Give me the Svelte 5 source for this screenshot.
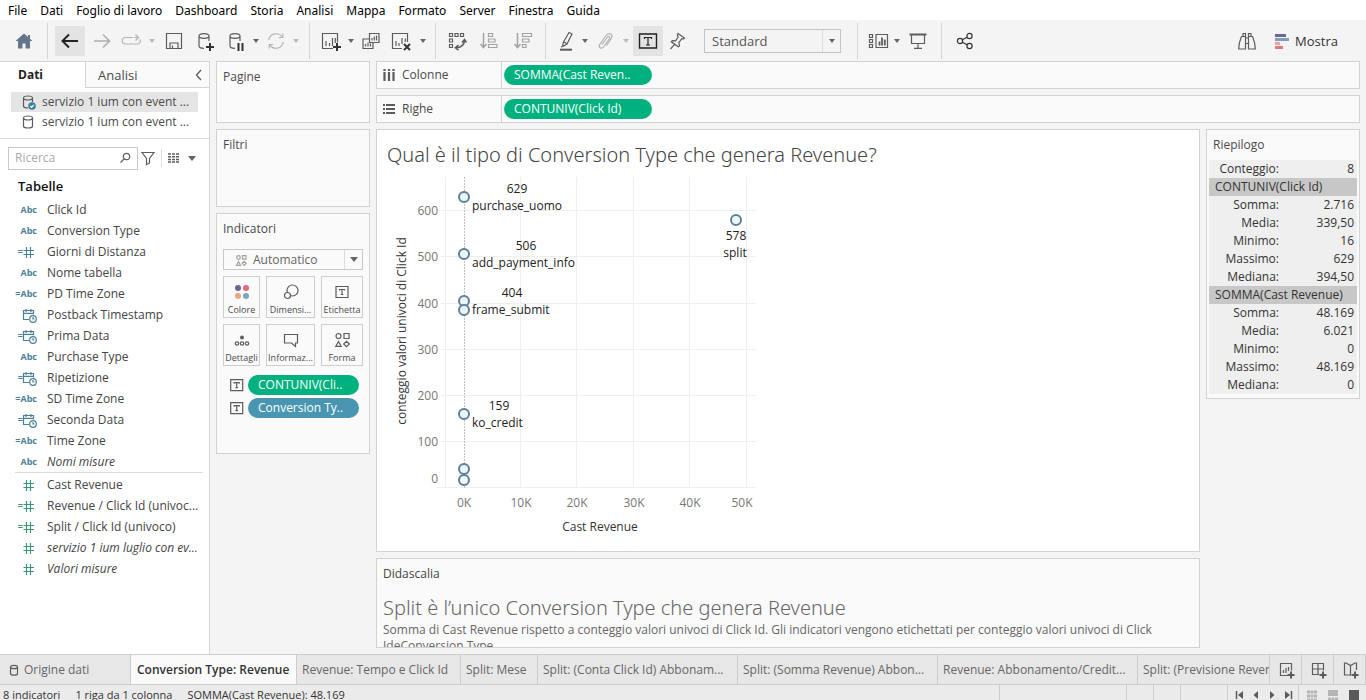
<script>
  const svg = (body, size = 24, cls = '') =>
    `<svg class="ico ${cls}" width="${size}" height="${size}" viewBox="0 0 ${size} ${size}" fill="none" stroke="currentColor" stroke-width="1.2" aria-hidden="true">${body}</svg>`;

  const plus = (x, y) => `<path d="M${x - 4} ${y}h8M${x} ${y - 4}v8" stroke="#333" stroke-width="2"/>`;
  const cyl = '<path d="M6 7v10c0 1.3 2 2.3 5 2.3M16 7v5M6 7c0-1.3 2-2.3 5-2.3s5 1 5 2.3-2 2.3-5 2.3S6 8.300 6 7z"/>';

  const icons = {
    home: svg('<path d="M12 4.500 3.500 12H6v7.500h4.500v-5h3v5H18V12h2.500L18 9.800V6h-2v2z" fill="#62778a" stroke="none"/>'),
    back: svg('<path d="M20 12H5M11 5.500 4.500 12l6.500 6.500" stroke="#222" stroke-width="2"/>'),
    forward: svg('<path d="M4 12h15M13 5.500l6.500 6.500-6.500 6.500" stroke="#adadad" stroke-width="1.600"/>'),
    redo: svg('<path d="M14 8.500H6.500a3 3 0 0 0 0 6.500h12a3 3 0 0 0 2.500-4.500M15 8.500h4M16.500 5.500 19.500 8.500l-3 3" stroke="#b4b4b4"/>'),
    save: svg('<path d="M4.500 4.500h15v15h-15zM8 19.500v-5.500h8v5.500M10.500 19.500v-3"/>'),
    dbAdd: svg(cyl + plus(17, 18)),
    dbPause: svg(cyl + '<path d="M14.500 14v8M18.500 14v8" stroke="#333" stroke-width="2"/>'),
    refresh: svg('<path d="M4.800 11a7.300 7.300 0 0 1 13.500-2.600M19.200 13a7.300 7.300 0 0 1-13.500 2.600M18.800 4.500v4h-4M5.200 19.500v-4h4" stroke="#b4b4b4"/>'),
    sheetAdd: svg('<path d="M14 19.500H3.500v-15h15v9M7 17v-5M10.500 17v-3M13.500 17V9M16.300 14V9"/>' + plus(18, 18)),
    duplicate: svg('<path d="M10.500 4.500h9.500v9h-9.500zM10.500 10H4v9.500h10v-6M13 11.500V9M15.300 11.500V7.500M17.500 11.500V6.500M6.500 17.500v-2.500M9 17.500v-4M11.500 17.500v-3"/>'),
    clear: svg('<path d="M13 19.500H3.500v-15h15v8.500M7 17v-5M10 17v-3M13 15V9M16.300 13V9.500"/><path d="M15 15l6 6M21 15l-6 6" stroke="#333" stroke-width="2"/>'),
    swap: svg('<path d="M4.500 4.500h3v3h-3zM10 4.500h3v3h-3zM15.500 4.500h3v3h-3zM4.500 10h3v3h-3zM4.500 15.500h3v3h-3z"/><path d="M19.500 11.500c0 4-3.500 7.300-8.500 7.300M17 13.500l2.500-3 2 3M13.500 16l-3.200 2.700 3.200 2.500" stroke-width="1.500"/>'),
    sortAsc: svg('<path d="M6.500 4v14M3.500 15l3 3.500 3-3.500" stroke-width="1.500"/><path d="M11.500 4.500h4v3h-4zM11.500 10h6.500v3h-6.500zM11.500 15.500h8.500v3h-8.500z"/>', 24, 'dim'),
    sortDesc: svg('<path d="M6.500 4v14M3.500 15l3 3.500 3-3.500" stroke-width="1.500"/><path d="M11.500 4.500h9v3h-9zM11.500 10h6.500v3h-6.500zM11.500 15.500h3.500v3h-3.500z"/>', 24, 'dim'),
    pen: svg('<path d="M15 3.500l3 1.500-5 10-3.500 2-.8-.5.800-3.500zM10 13l3 1.700" /><path d="M6 20.700h12" stroke-width="2"/><path d="M7 18l2.500-1"/>'),
    clip: svg('<path d="M9 15.500l5.500-7.500c1.200-1.500 3 0 2 1.500l-6 8.500c-2 2.500-5.500.3-3.800-2.500l6.800-9.500c2.500-3.200 7-.3 5 3l-5 7.500" stroke="#b0b0b0"/>'),
    textBox: svg('<path d="M3.500 5h17v14h-17z" stroke="#222" stroke-width="1.400"/><path d="M8.500 10V8.500h7V10M12 8.500v7.500M10 16h4" stroke="#222"/>'),
    pin: svg('<path d="M13 4.500l6.500 4.500-1.200 1-1.600-.3-2.800 4 .6 3.300-1.200.8-7-5 1-1.200 3.300.2 2.600-3.800-.8-1.800zM9.500 15.300 5.500 20"/>'),
    cards: svg('<path d="M9 5.500h11.500v13H9z"/><path d="M12.500 16.500v-4M15 16.500v-8M17.800 16.500v-6" stroke-width="1.800"/><path d="M2.500 5.500h3v3h-3zM2.500 10.500h3v3h-3zM2.500 15.500h3v3h-3z"/>'),
    present: svg('<path d="M3.500 5.500h17" stroke-width="2"/><path d="M5.500 6v8.500h13V6M12 14.500v4.500M8 19.300h8"/>'),
    share: svg('<circle cx="7" cy="12" r="2.600"/><circle cx="16.500" cy="7" r="2.600"/><circle cx="16.500" cy="17" r="2.600"/><path d="M9.300 10.800l4.900-2.600M9.300 13.200l4.900 2.600"/>', 24, 'dark'),
    binoculars: svg('<path d="M10.500 6.500v13.500H3.700c0-5 1.300-9 2.800-12.500h4M13.500 6.500v13.500h6.800c0-5-1.300-9-2.800-12.500h-4M8 7V4.500h2.500V7M13.500 7V4.500H16V7M10.500 9h3M10.500 14.500h3"/>'),
    showMe: svg('<g stroke="none"><path d="M1 1h11v3H1z" fill="#6d6690"/><path d="M1 5h14v3H1z" fill="#7f9cbd"/><path d="M1 9h5v3H1z" fill="#eba39a"/><path d="M1 13h8v3H1z" fill="#e0787b"/></g>', 16),
    chevron: svg('<path d="M10 3 5.500 8l4.500 5" stroke-width="1.300"/>', 16),
    db: svg('<path d="M3.500 4v8c0 1.200 1.800 2 4.500 2s4.500-.8 4.500-2V4M3.500 4c0-1.200 1.800-2 4.500-2s4.500.8 4.500 2-1.800 2-4.500 2-4.500-.8-4.500-2z"/>', 16),
    dbSmall: svg('<path d="M3.500 4v6.500c0 1 1.500 1.700 3.500 1.700s3.500-.7 3.500-1.700V4M3.500 4c0-1 1.500-1.700 3.500-1.700s3.500.7 3.500 1.700-1.500 1.700-3.500 1.700S3.500 5 3.500 4z"/>', 14),
    dbOk: svg('<path d="M3.500 4v8c0 1.200 1.800 2 4.500 2M12.500 8V4M3.500 4c0-1.200 1.800-2 4.500-2s4.500.8 4.500 2-1.800 2-4.500 2-4.500-.8-4.500-2z"/><circle cx="12" cy="12" r="3.800" fill="#3d7d9c" stroke="none"/><path d="M10.300 12l1.300 1.300 2.200-2.500" stroke="#fff"/>', 16),
    search: svg('<circle cx="9.500" cy="6.500" r="3.200"/><path d="M7 9 3.500 12.500"/>', 16),
    filter: svg('<path d="M2 2.500h12l-4.500 6v4.500L6.500 14.500V8.500z"/>', 16),
    grid: svg('<path d="M2 4h12M2 6.700h12M2 9.400h12M2 12.100h12" stroke-width="1.500" stroke-dasharray="3 1"/>', 16),
    columns: svg('<path d="M3.500 5v9M8 5v9M12.500 5v9M3.500 2v2M8 2v2M12.500 2v2" stroke-width="2.200"/>', 16),
    rows: svg('<path d="M5 4h9M5 8h9M5 12h9M2 4h2M2 8h2M2 12h2" stroke-width="2.200"/>', 16),
    shapesSmall: svg('<circle cx="4.500" cy="4.500" r="1.800"/><path d="M8.500 2.700H12v3.500H8.500zM4.500 8.500l2 3.800h-4zM10.200 8.300l2 2-2 2-2-2z"/>', 14, 'dim'),
    color: svg('<g stroke="none"><circle cx="8" cy="8" r="3" fill="#706390"/><circle cx="16" cy="8" r="3" fill="#df6b7c"/><circle cx="8" cy="16" r="3" fill="#eba980"/><circle cx="16" cy="16" r="3" fill="#7fa4c0"/></g>'),
    size: svg('<circle cx="13.500" cy="10.500" r="5.500"/><circle cx="8.500" cy="15.500" r="3" fill="#fafafa"/>'),
    label: svg('<path d="M6 6.500h12v11H6z"/><path d="M9.500 10.500v-1h5v1M12 9.500v5M10.800 14.500h2.500"/>'),
    detail: svg('<circle cx="12" cy="9.500" r="2" fill="currentColor" stroke="none"/><circle cx="7" cy="15.500" r="1.700"/><circle cx="12" cy="15.500" r="1.700"/><circle cx="17" cy="15.500" r="1.700"/>'),
    tooltip: svg('<path d="M5.500 6.500h13v8.500h-2v3.500l-4-3.500h-7z"/>'),
    shape: svg('<circle cx="8.500" cy="8" r="2.500"/><path d="M14 5.500h5v5h-5zM8.500 13.500l2.700 4.800H5.800zM16.500 13.300l2.800 2.700-2.800 2.700-2.800-2.700z"/>'),
    tSmall: svg('<path d="M.7 1.700h12v11h-12z"/><path d="M4.200 5.700v-1h5v1M6.700 4.700v5M5.500 9.700H8"/>', 14),
    hash: svg('<path d="M5.500 3v11M9.500 3v11M2.500 6.500h10.500M2.500 10.500h10.500"/>', 16),
    date: svg('<path d="M8 12.500H2.500v-9h10v4M2.500 6.300h10M5 2v3M10 2v3"/><circle cx="12" cy="12" r="3.300"/><path d="M12 10v2h1.500"/>', 16),
    tabSheet: svg('<path d="M10 14.500H2.500v-12h11v7M5.500 12V9M8 12V7M10.500 10V6"/><path d="M9.500 14h7M13 10.500v7" stroke-width="2"/>', 18),
    tabDash: svg('<path d="M9 13.500H2.500v-11h11v7M2.500 8h11M8 2.500v11"/><path d="M9.500 14h7M13 10.500v7" stroke-width="2"/>', 18),
    tabStory: svg('<path d="M9 14.500 8.500 14H2.500v-12h1.500l4.500 2.500 4.500-2.500h1.500V9M8.500 4.500v9.500"/><path d="M9.500 14h7M13 10.500v7" stroke-width="2"/>', 18),
    first: svg('<path d="M2.500 2v8" stroke-width="1.500"/><path d="M9 2v8L4 6z" fill="currentColor" stroke="none"/>', 12),
    prev: svg('<path d="M8 2v8L3.500 6z" fill="currentColor" stroke="none"/>', 12),
    next: svg('<path d="M4 2v8l4.500-4z" fill="currentColor" stroke="none"/>', 12),
    last: svg('<path d="M9.500 2v8" stroke-width="1.500"/><path d="M3 2v8l5-4z" fill="currentColor" stroke="none"/>', 12),
    viewGrid: svg('<path d="M1 3h10M1 7h10M1 11h10" stroke="#b5b5b5" stroke-width="3" stroke-dasharray="3 .5"/>', 12),
    viewStrip: svg('<path d="M1 1h10v6H1z" fill="#b5b5b5" stroke="none"/><path d="M1 10h10" stroke="#b5b5b5" stroke-width="3" stroke-dasharray="3 .5"/>', 12),
    viewFull: svg('<path d="M1 1h10v11H1z" fill="#5a5a5a" stroke="none"/>', 12)
  };

  const menus = ['File', 'Dati', 'Foglio di lavoro', 'Dashboard', 'Storia', 'Analisi', 'Mappa', 'Formato', 'Server', 'Finestra', 'Guida'];

  const toolsLeft = [
    ['home', 34], ['sep'], ['back', 30, 'on'], ['forward', 34], ['redo', 24], ['caret', 18, 'off'], ['save', 26],
    ['dbAdd', 36], ['dbPause', 26], ['caret', 14], ['refresh', 26], ['caret', 14, 'off'], ['sep'],
    ['sheetAdd', 28], ['caret', 12], ['duplicate', 28], ['clear', 32], ['caret', 12], ['sep'],
    ['swap', 28], ['sortAsc', 36], ['sortDesc', 32], ['sep'],
    ['pen', 26], ['caret', 12], ['clip', 28], ['caret', 14, 'off'], ['textBox', 30, 'on'], ['pin', 28]
  ];
  const toolsRight = [['sep'], ['cards', 28], ['caret', 8], ['present', 34], ['sep'], ['share', 32]];

  const dimensions = [
    ['abc', 'Click Id'], ['abc', 'Conversion Type'], ['=hash', 'Giorni di Distanza'], ['abc', 'Nome tabella'],
    ['=abc', 'PD Time Zone'], ['date', 'Postback Timestamp'], ['=date', 'Prima Data'], ['abc', 'Purchase Type'],
    ['=date', 'Ripetizione'], ['=abc', 'SD Time Zone'], ['=date', 'Seconda Data'], ['=abc', 'Time Zone'],
    ['abc', 'Nomi misure', true]
  ];
  const measures = [
    ['hash', 'Cast Revenue'], ['=hash', 'Revenue / Click Id (univoc...'], ['=hash', 'Split / Click Id (univoco)'],
    ['hash', 'servizio 1 ium luglio con ev...', true], ['hash', 'Valori misure', true]
  ];

  const marks = [
    ['color', 'Colore'], ['size', 'Dimensi...'], ['label', 'Etichetta'],
    ['detail', 'Dettagli'], ['tooltip', 'Informaz...'], ['shape', 'Forma']
  ];

  const summary = [
    ['CONTUNIV(Click Id)', [['Somma:', '2.716'], ['Media:', '339,50'], ['Minimo:', '16'], ['Massimo:', '629'], ['Mediana:', '394,50']]],
    ['SOMMA(Cast Revenue)', [['Somma:', '48.169'], ['Media:', '6.021'], ['Minimo:', '0'], ['Massimo:', '48.169'], ['Mediana:', '0']]]
  ];

  const tabs = [
    ['Revenue: Tempo e Click Id', 164], ['Split: Mese', 77], ['Split: (Conta Click Id) Abbonam...', 200],
    ['Split: (Somma Revenue) Abbon...', 200], ['Revenue: Abbonamento/Credit...', 200]
  ];

  const px = (v) => Math.round(87 + v * 5.65);
  const py = (v) => Math.round(317.4 - v * 0.462);
  const points = [
    { x: 0, y: 629, name: 'purchase_uomo', lx: 95, cx: 140 },
    { x: 0, y: 506, name: 'add_payment_info', lx: 95, cx: 149 },
    { x: 0, y: 404, name: 'frame_submit', lx: 95, cx: 135 },
    { x: 0, y: 385 },
    { x: 0, y: 159, name: 'ko_credit', lx: 95, cx: 122 },
    { x: 0, y: 40 },
    { x: 0, y: 16 },
    { x: 48.169, y: 578 }
  ];
</script>

<div class="app">
  <nav class="menubar">
    {#each menus as m}<button>{m}</button>{/each}
  </nav>

  {#snippet tool(t)}
    {#if t[0] === 'sep'}
      <span class="sep"></span>
    {:else if t[0] === 'caret'}
      <button class="tool {t[2] ?? ''}" style="width:{t[1]}px" aria-label="opzioni"><i class="caret"></i></button>
    {:else}
      <button class="tool {t[2] ?? ''}" style="width:{t[1]}px" aria-label={t[0]}>{@html icons[t[0]]}</button>
    {/if}
  {/snippet}

  <header class="toolbar">
    {#each toolsLeft as t}{@render tool(t)}{/each}
    <label class="fit">
      <select aria-label="Adatta"><option>Standard</option></select>
      <span class="drop"><i class="caret"></i></span>
    </label>
    {#each toolsRight as t}{@render tool(t)}{/each}
    <span class="grow"></span>
    <button class="tool bino" aria-label="Cerca">{@html icons.binoculars}</button>
    <button class="showme">{@html icons.showMe}<span>Mostra</span></button>
  </header>

  {#snippet field(f, kind)}
    <li class={kind}>
      <span class="type">
        {#if f[0].startsWith('=')}<b>=</b>{/if}
        {#if f[0].endsWith('abc')}<b>Abc</b>{:else}{@html icons[f[0].replace('=', '')]}{/if}
      </span>
      <span class:italic={f[2]}>{f[1]}</span>
    </li>
  {/snippet}

  <div class="main">
    <aside class="data">
      <div class="panes">
        <button class="current">Dati</button>
        <button class="other"><span>Analisi</span>{@html icons.chevron}</button>
      </div>
      <ul class="sources">
        <li class="picked">{@html icons.dbOk}<span>servizio 1 ium con event ...</span></li>
        <li>{@html icons.db}<span>servizio 1 ium con event ...</span></li>
      </ul>
      <div class="find">
        <label class="box"><input type="text" placeholder="Ricerca" aria-label="Ricerca" />{@html icons.search}</label>
        <button aria-label="Filtro">{@html icons.filter}</button>
        <span class="bar"></span>
        <button aria-label="Visualizza">{@html icons.grid}<i class="caret big"></i></button>
      </div>
      <h2>Tabelle</h2>
      <ul class="fields">{#each dimensions as f}{@render field(f, 'dim-field')}{/each}</ul>
      <ul class="fields measures">{#each measures as f}{@render field(f, 'mea-field')}{/each}</ul>
    </aside>

    <div class="work">
      <div class="cards">
        <section class="card pages"><h3>Pagine</h3></section>
        <section class="card filters"><h3>Filtri</h3></section>
        <section class="card marks">
          <h3>Indicatori</h3>
          <label class="marktype">
            {@html icons.shapesSmall}
            <select aria-label="Tipo di indicatore"><option>Automatico</option></select>
            <span class="drop"><i class="caret big"></i></span>
          </label>
          <div class="markgrid">
            {#each marks as m}<button>{@html icons[m[0]]}<span>{m[1]}</span></button>{/each}
          </div>
          <div class="encoding">{@html icons.tSmall}<button class="pill green">CONTUNIV(Cli..</button></div>
          <div class="encoding">{@html icons.tSmall}<button class="pill blue">Conversion Ty..</button></div>
        </section>
      </div>

      <div class="stage">
        <div class="shelf">
          <span class="name">{@html icons.columns}Colonne</span>
          <button class="pill green">SOMMA(Cast Reven..</button>
        </div>
        <div class="shelf">
          <span class="name">{@html icons.rows}Righe</span>
          <button class="pill green">CONTUNIV(Click Id)</button>
        </div>
        <div class="lower">
          <div class="viewcol">
            <section class="view">
              <h1>Qual è il tipo di Conversion Type che genera Revenue?</h1>
              <svg class="chart" width="400" height="370" viewBox="0 0 400 370" role="img" aria-label="Cast Revenue">
                <g class="gridlines">
                  <path d="M68.5 7V318" />
                  {#each [10, 20, 30, 40, 50] as v}<path d="M{px(v) - 0.5} 7V318" />{/each}
                  {#each [100, 200, 300, 400, 500, 600] as v}<path d="M64 {py(v) + 0.5}H379" />{/each}
                  <path d="M60 317.500H379" />
                </g>
                <path class="zero" d="M87.500 7V318" />
                <g class="ticks">
                  {#each [100, 200, 300, 400, 500, 600] as v}<text x="61" y={py(v) + 5} text-anchor="end">{v}</text>{/each}
                  <text x="61" y="313" text-anchor="end">0</text>
                  {#each [0, 10, 20, 30, 40] as v}<text x={px(v)} y="337" text-anchor="middle">{v}K</text>{/each}
                  <text x="365" y="337" text-anchor="middle">50K</text>
                </g>
                {#each points as p}
                  <circle cx={px(p.x)} cy={py(p.y)} r="5" />
                  {#if p.name}
                    <text x={p.cx} y={py(p.y) - 4} text-anchor="middle">{p.y}</text>
                    <text x={p.lx} y={py(p.y) + 13}>{p.name}</text>
                  {/if}
                {/each}
                <text x="359" y="70" text-anchor="middle">578</text>
                <text x="358" y="87" text-anchor="middle">split</text>
                <text class="axis" x="223" y="361" text-anchor="middle">Cast Revenue</text>
                <text class="axis" transform="translate(29 161) rotate(-90)" text-anchor="middle">conteggio valori univoci di Click Id</text>
              </svg>
            </section>
            <section class="caption">
              <h3>Didascalia</h3>
              <h4>Split è l’unico Conversion Type che genera Revenue</h4>
              <p>Somma di Cast Revenue rispetto a conteggio valori univoci di Click Id. Gli indicatori vengono etichettati per conteggio valori univoci di Click IdeConversion Type.</p>
            </section>
          </div>
          <section class="card summary">
            <h3>Riepilogo</h3>
            <table>
              <tbody>
                <tr><th>Conteggio:</th><td>8</td></tr>
                {#each summary as [title, rows]}
                  <tr class="group"><th colspan="2">{title}</th></tr>
                  {#each rows as [k, v]}<tr><th>{k}</th><td>{v}</td></tr>{/each}
                {/each}
              </tbody>
            </table>
          </section>
        </div>
      </div>
    </div>
  </div>

  <nav class="tabs">
    <button class="source">{@html icons.dbSmall}Origine dati</button>
    <button class="active">Conversion Type: Revenue</button>
    {#each tabs as [t, w]}<button style="width:{w}px">{t}</button>{/each}
    <button class="rest">Split: (Previsione Revenue)</button>
    {#each ['tabSheet', 'tabDash', 'tabStory'] as n}<button class="add" aria-label={n}>{@html icons[n]}</button>{/each}
  </nav>

  <footer class="status">
    <span>8 indicatori</span><span>1 riga da 1 colonna</span><span>SOMMA(Cast Revenue): 48.169</span>
    <div class="cells">
      <i style="width:127px"></i><i style="width:27px"></i><i style="width:27px"></i><i style="width:47px"></i>
      <div class="nav">{#each ['first', 'prev', 'next', 'last'] as n}<button aria-label={n}>{@html icons[n]}</button>{/each}</div>
      <div class="modes">{#each ['viewGrid', 'viewStrip', 'viewFull'] as n}<button aria-label={n}>{@html icons[n]}</button>{/each}</div>
    </div>
  </footer>
</div>

<style>
  :global(body) { margin: 0; }
  .app {
    height: 100vh; display: flex; flex-direction: column; overflow: hidden;
    background: #f4f4f4; color: #4a4a4a;
    font: 12px/18px "Open Sans", "Noto Sans", sans-serif;
  }
  .app :global(*) { box-sizing: border-box; }
  .app :global(.ico) { display: block; flex: none; color: #5c5c5c; }
  .app :global(.ico.dim) { color: #a3a3a3; }
  .app :global(.ico.dark) { color: #333; }
  button, select, input { font: inherit; color: inherit; background: none; border: 0; padding: 0; margin: 0; border-radius: 0; white-space: nowrap; }
  h1, h2, h3, h4, p, ul { margin: 0; padding: 0; font-weight: 400; list-style: none; }
  h3 { font-size: 12px; }

  .menubar { flex: none; display: flex; height: 20px; padding: 2px 8px 0; gap: 13px; background: #fff; color: #000; }
  .menubar button { font-family: "Noto Sans", sans-serif; }

  .toolbar { flex: none; display: flex; align-items: center; height: 41px; padding-left: 7px; }
  .tool { flex: none; display: flex; align-items: center; justify-content: center; height: 30px; }
  .tool.on { background: #e3e3e3; }
  .sep { flex: none; width: 1px; height: 36px; margin: 0 7px 0 6px; background: #d4d4d4; }
  .caret { display: block; border: 3px solid transparent; border-top: 4px solid #666; border-bottom: 0; }
  .caret.big { border-width: 4px; border-bottom: 0; border-top-width: 5px; }
  .off .caret { border-top-color: #bbb; }
  .fit { display: flex; align-items: center; width: 137px; height: 24px; margin: 0 10px 0 13px; border: 1px solid #c4c4c4; flex: none; }
  select { appearance: none; flex: 1; min-width: 0; height: 100%; }
  .fit select { padding-left: 7px; font-size: 13px; color: #555; }
  .drop { display: flex; align-items: center; justify-content: center; width: 18px; height: 100%; border-left: 1px solid #ddd; }
  .grow { flex: 1; }
  .bino { width: 30px; margin-right: 12px; }
  .showme { display: flex; align-items: center; gap: 5px; margin-right: 28px; color: #333; font-size: 13px; }

  .main { flex: 1; min-height: 0; display: flex; }
  .data { flex: none; width: 210px; background: #fff; border-right: 1px solid #d4d4d4; border-top: 1px solid #d4d4d4; overflow: hidden; }
  .panes { display: flex; height: 26px; }
  .panes button { font-size: 13px; }
  .current { width: 85px; padding-left: 18px; text-align: left; font-weight: 700; color: #222; }
  .panes .current { font-size: 12px; }
  .other { flex: 1; display: flex; align-items: center; justify-content: space-between; padding: 0 2px 0 12px; background: #fafafa; border-left: 1px solid #d4d4d4; border-bottom: 1px solid #d4d4d4; }
  .sources { padding: 4px 11px 6px; border-bottom: 1px solid #d9d9d9; }
  .sources li { display: flex; align-items: center; gap: 6px; height: 20px; padding-left: 9px; white-space: nowrap; }
  .picked { background: #e5e5e5; }
  .find { display: flex; align-items: center; height: 38px; padding-left: 8px; }
  .find button { display: flex; align-items: center; gap: 6px; }
  .box { display: flex; align-items: center; width: 130px; height: 23px; margin-right: 2px; padding: 0 4px 0 6px; border: 1px solid #c8c8c8; }
  .box input { flex: 1; min-width: 0; outline: 0; }
  .box input::placeholder { color: #aaa; opacity: 1; }
  .bar { width: 1px; height: 18px; margin: 0 4px 0 5px; background: #ddd; }
  .data h2 { padding: 0 18px; height: 22px; font-size: 13px; font-weight: 600; color: #111; }
  .fields li { display: flex; align-items: center; height: 21px; gap: 10px; white-space: nowrap; color: #444; }
  .type { display: flex; align-items: center; justify-content: flex-end; width: 37px; flex: none; color: #4a8199; }
  .type b { font-size: 9px; font-weight: 700; }
  .type b + :global(.ico) { margin-left: -2px; }
  .dim-field :global(.ico) { color: #4a8199; }
  .mea-field :global(.ico), .mea-field .type { color: #3c957b; }
  .italic { font-style: italic; }
  .measures { margin: 0 6px 0 15px; padding-top: 1px; border-top: 1px solid #dcdcdc; }
  .measures .type { width: 22px; }

  .work { flex: 1; min-width: 0; display: flex; gap: 6px; padding: 0 6px 6px; }
  .cards { flex: none; width: 154px; display: flex; flex-direction: column; gap: 6px; }
  .card, .shelf, .view, .caption { border: 1px solid #d2d2d2; background: #fafafa; }
  .card h3 { padding: 6px; }
  .pages { height: 62px; }
  .filters { height: 78px; }
  .marks { height: 241px; }
  .marktype { display: flex; align-items: center; gap: 5px; height: 21px; margin: 5px 6px 6px; padding-left: 10px; border: 1px solid #c8c8c8; color: #666; }
  .markgrid { display: grid; grid-template-columns: 37fr 49fr 42fr; gap: 6px; margin: 0 6px 9px; }
  .markgrid button { display: flex; flex-direction: column; align-items: center; height: 42px; padding-top: 3px; border: 1px solid #cecece; font-size: 9px; line-height: 12px; min-width: 0; }
  .encoding { display: flex; align-items: center; gap: 4px; height: 20px; margin: 0 10px 3px 13px; }
  .pill { height: 20px; border-radius: 10px; color: #fff; text-align: left; padding: 0 10px; line-height: 20px; }
  .encoding .pill { flex: 1; }
  .green { background: #00b180; }
  .blue { background: #4996b2; }

  .stage { flex: 1; min-width: 0; display: flex; flex-direction: column; gap: 6px; }
  .shelf { flex: none; display: flex; align-items: center; height: 28px; gap: 2px; }
  .shelf .name { display: flex; align-items: center; gap: 5px; width: 125px; height: 100%; padding-left: 4px; border-right: 1px solid #d2d2d2; }
  .shelf .pill { width: 148px; }
  .lower { flex: 1; min-height: 0; display: flex; align-items: flex-start; gap: 6px; }
  .viewcol { flex: 1; min-width: 0; height: 100%; display: flex; flex-direction: column; gap: 6px; }
  .view { flex: 1; min-height: 0; overflow: hidden; background: #fff; }
  h1, h4 { font-family: "Noto Sans", "Open Sans", sans-serif; font-size: 20px; line-height: 28px; font-weight: 300; }
  .view h1 { height: 40px; padding: 11px 10px 0; color: #444; }
  .chart { display: block; font-size: 12px; fill: #222; }
  .gridlines path { stroke: #efefef; }
  .zero { stroke: #c0c0c0; stroke-dasharray: 2 1; }
  .ticks { fill: #777; }
  .axis { fill: #333; }
  .chart circle { fill: #eef8fc; stroke: #5b809c; stroke-width: 2; }
  .caption { flex: none; height: 90px; padding: 6px; overflow: hidden; color: #666; }
  .caption h3 { color: #444; }
  .caption h4 { margin-top: 11px; }
  .caption p { line-height: 16px; }

  .summary { flex: none; width: 154px; padding: 0 2px 4px; }
  .summary h3 { padding: 6px 4px; }
  table { width: 100%; border-collapse: collapse; background: #efefef; color: #333; }
  th, td { padding: 0; font-weight: 400; text-align: right; height: 18px; line-height: 18px; }
  th { width: 70px; }
  td { padding-right: 3px; }
  .group th { text-align: left; padding-left: 6px; background: #c7c7c7; }

  .tabs { flex: none; display: flex; height: 31px; border-top: 1px solid #cdcdcd; border-bottom: 1px solid #cdcdcd; background: #e7e7e7; color: #666; }
  .tabs button { flex: none; overflow: hidden; text-align: left; padding: 0 5px; border-right: 1px solid #cdcdcd; }
  .tabs .source { display: flex; align-items: center; gap: 3px; width: 131px; padding-left: 7px; }
  .tabs .active { width: 166px; padding: 0 6px; background: #fafafa; font-weight: 600; color: #333; }
  .tabs .rest { flex: 1 1 0; min-width: 0; }
  .tabs .add { width: 32px; padding-left: 8px; }

  .status { flex: none; display: flex; height: 15px; padding-left: 3px; gap: 15px; overflow: hidden; background: #ebebeb; color: #333; font-size: 11px; line-height: 20px; }
  .status span { white-space: nowrap; }
  .cells { display: flex; margin-left: auto; }
  .cells i { border-left: 1px solid #cdcdcd; }
  .nav, .modes { display: flex; border-left: 1px solid #cdcdcd; align-items: flex-start; padding-top: 4px; }
  .nav { width: 71px; padding-left: 6px; gap: 4px; }
  .modes { width: 68px; padding-left: 7px; gap: 9px; }
</style>
